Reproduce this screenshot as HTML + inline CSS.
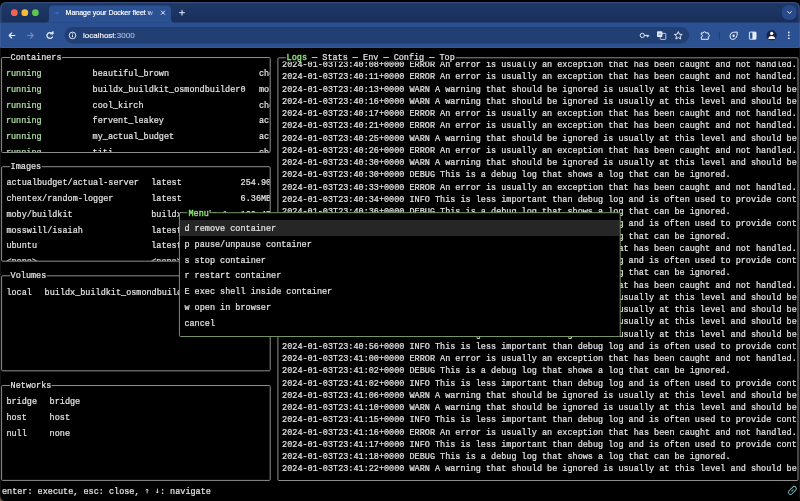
<!DOCTYPE html>
<html><head><meta charset="utf-8"><style>
html,body{margin:0;padding:0;background:#000;width:800px;height:501px;overflow:hidden;position:relative}
svg{will-change:transform}
svg text{white-space:pre}
</style></head><body>
<svg width="800" height="501" viewBox="0 0 800 501" style="position:absolute;left:0;top:0">
<rect x="0" y="0" width="800" height="501" fill="#000"/>
<rect x="1.6" y="57.5" width="268.59999999999997" height="95.0" fill="none" stroke="#8e8e8e" stroke-width="1" rx="1"/>
<rect x="1.6" y="166.7" width="268.59999999999997" height="94.5" fill="none" stroke="#8e8e8e" stroke-width="1" rx="1"/>
<rect x="1.6" y="275.8" width="268.59999999999997" height="95.0" fill="none" stroke="#8e8e8e" stroke-width="1" rx="1"/>
<rect x="1.6" y="385.5" width="268.59999999999997" height="94.89999999999998" fill="none" stroke="#8e8e8e" stroke-width="1" rx="1"/>
<clipPath id="c1"><rect x="2.1" y="58.0" width="267.59999999999997" height="94.0"/></clipPath><g clip-path="url(#c1)">
<text transform="translate(5.9,76.2) scale(1,1.12)" fill="#b0e0a5" stroke="#b0e0a5" stroke-width="0.2" font-size="8.5" font-family='"Liberation Mono", monospace' >running</text>
<text transform="translate(92.6,76.2) scale(1,1.12)" fill="#e4e4e4" stroke="#e4e4e4" stroke-width="0.2" font-size="8.5" font-family='"Liberation Mono", monospace' >beautiful_brown</text>
<text transform="translate(259.0,76.2) scale(1,1.12)" fill="#e4e4e4" stroke="#e4e4e4" stroke-width="0.2" font-size="8.5" font-family='"Liberation Mono", monospace' >che</text>
<text transform="translate(5.9,91.95) scale(1,1.12)" fill="#b0e0a5" stroke="#b0e0a5" stroke-width="0.2" font-size="8.5" font-family='"Liberation Mono", monospace' >running</text>
<text transform="translate(92.6,91.95) scale(1,1.12)" fill="#e4e4e4" stroke="#e4e4e4" stroke-width="0.2" font-size="8.5" font-family='"Liberation Mono", monospace' >buildx_buildkit_osmondbuilder0</text>
<text transform="translate(259.0,91.95) scale(1,1.12)" fill="#e4e4e4" stroke="#e4e4e4" stroke-width="0.2" font-size="8.5" font-family='"Liberation Mono", monospace' >moby/buildkit</text>
<text transform="translate(5.9,107.7) scale(1,1.12)" fill="#b0e0a5" stroke="#b0e0a5" stroke-width="0.2" font-size="8.5" font-family='"Liberation Mono", monospace' >running</text>
<text transform="translate(92.6,107.7) scale(1,1.12)" fill="#e4e4e4" stroke="#e4e4e4" stroke-width="0.2" font-size="8.5" font-family='"Liberation Mono", monospace' >cool_kirch</text>
<text transform="translate(259.0,107.7) scale(1,1.12)" fill="#e4e4e4" stroke="#e4e4e4" stroke-width="0.2" font-size="8.5" font-family='"Liberation Mono", monospace' >chentex/random-logger</text>
<text transform="translate(5.9,123.45) scale(1,1.12)" fill="#b0e0a5" stroke="#b0e0a5" stroke-width="0.2" font-size="8.5" font-family='"Liberation Mono", monospace' >running</text>
<text transform="translate(92.6,123.45) scale(1,1.12)" fill="#e4e4e4" stroke="#e4e4e4" stroke-width="0.2" font-size="8.5" font-family='"Liberation Mono", monospace' >fervent_leakey</text>
<text transform="translate(259.0,123.45) scale(1,1.12)" fill="#e4e4e4" stroke="#e4e4e4" stroke-width="0.2" font-size="8.5" font-family='"Liberation Mono", monospace' >actualbudget/actual-server</text>
<text transform="translate(5.9,139.2) scale(1,1.12)" fill="#b0e0a5" stroke="#b0e0a5" stroke-width="0.2" font-size="8.5" font-family='"Liberation Mono", monospace' >running</text>
<text transform="translate(92.6,139.2) scale(1,1.12)" fill="#e4e4e4" stroke="#e4e4e4" stroke-width="0.2" font-size="8.5" font-family='"Liberation Mono", monospace' >my_actual_budget</text>
<text transform="translate(259.0,139.2) scale(1,1.12)" fill="#e4e4e4" stroke="#e4e4e4" stroke-width="0.2" font-size="8.5" font-family='"Liberation Mono", monospace' >actualbudget/actual-server</text>
<text transform="translate(5.9,154.95) scale(1,1.12)" fill="#b0e0a5" stroke="#b0e0a5" stroke-width="0.2" font-size="8.5" font-family='"Liberation Mono", monospace' >running</text>
<text transform="translate(92.6,154.95) scale(1,1.12)" fill="#e4e4e4" stroke="#e4e4e4" stroke-width="0.2" font-size="8.5" font-family='"Liberation Mono", monospace' >titi</text>
<text transform="translate(259.0,154.95) scale(1,1.12)" fill="#e4e4e4" stroke="#e4e4e4" stroke-width="0.2" font-size="8.5" font-family='"Liberation Mono", monospace' >chentex/random-logger</text>
</g>
<clipPath id="c2"><rect x="2.1" y="167.2" width="267.59999999999997" height="93.5"/></clipPath><g clip-path="url(#c2)">
<text transform="translate(6.4,185.39999999999998) scale(1,1.12)" fill="#e4e4e4" stroke="#e4e4e4" stroke-width="0.2" font-size="8.5" font-family='"Liberation Mono", monospace' >actualbudget/actual-server</text>
<text transform="translate(151.2,185.39999999999998) scale(1,1.12)" fill="#e4e4e4" stroke="#e4e4e4" stroke-width="0.2" font-size="8.5" font-family='"Liberation Mono", monospace' >latest</text>
<text transform="translate(240.6,185.39999999999998) scale(1,1.12)" fill="#e4e4e4" stroke="#e4e4e4" stroke-width="0.2" font-size="8.5" font-family='"Liberation Mono", monospace' >254.90MB</text>
<text transform="translate(6.4,201.14999999999998) scale(1,1.12)" fill="#e4e4e4" stroke="#e4e4e4" stroke-width="0.2" font-size="8.5" font-family='"Liberation Mono", monospace' >chentex/random-logger</text>
<text transform="translate(151.2,201.14999999999998) scale(1,1.12)" fill="#e4e4e4" stroke="#e4e4e4" stroke-width="0.2" font-size="8.5" font-family='"Liberation Mono", monospace' >latest</text>
<text transform="translate(240.6,201.14999999999998) scale(1,1.12)" fill="#e4e4e4" stroke="#e4e4e4" stroke-width="0.2" font-size="8.5" font-family='"Liberation Mono", monospace' >6.36MB</text>
<text transform="translate(6.4,216.89999999999998) scale(1,1.12)" fill="#e4e4e4" stroke="#e4e4e4" stroke-width="0.2" font-size="8.5" font-family='"Liberation Mono", monospace' >moby/buildkit</text>
<text transform="translate(151.2,216.89999999999998) scale(1,1.12)" fill="#e4e4e4" stroke="#e4e4e4" stroke-width="0.2" font-size="8.5" font-family='"Liberation Mono", monospace' >buildx-stable-1</text>
<text transform="translate(240.6,216.89999999999998) scale(1,1.12)" fill="#e4e4e4" stroke="#e4e4e4" stroke-width="0.2" font-size="8.5" font-family='"Liberation Mono", monospace' >160.47MB</text>
<text transform="translate(6.4,232.64999999999998) scale(1,1.12)" fill="#e4e4e4" stroke="#e4e4e4" stroke-width="0.2" font-size="8.5" font-family='"Liberation Mono", monospace' >mosswill/isaiah</text>
<text transform="translate(151.2,232.64999999999998) scale(1,1.12)" fill="#e4e4e4" stroke="#e4e4e4" stroke-width="0.2" font-size="8.5" font-family='"Liberation Mono", monospace' >latest</text>
<text transform="translate(240.6,232.64999999999998) scale(1,1.12)" fill="#e4e4e4" stroke="#e4e4e4" stroke-width="0.2" font-size="8.5" font-family='"Liberation Mono", monospace' >36.3MB</text>
<text transform="translate(6.4,248.39999999999998) scale(1,1.12)" fill="#e4e4e4" stroke="#e4e4e4" stroke-width="0.2" font-size="8.5" font-family='"Liberation Mono", monospace' >ubuntu</text>
<text transform="translate(151.2,248.39999999999998) scale(1,1.12)" fill="#e4e4e4" stroke="#e4e4e4" stroke-width="0.2" font-size="8.5" font-family='"Liberation Mono", monospace' >latest</text>
<text transform="translate(240.6,248.39999999999998) scale(1,1.12)" fill="#e4e4e4" stroke="#e4e4e4" stroke-width="0.2" font-size="8.5" font-family='"Liberation Mono", monospace' >77.9MB</text>
<text transform="translate(6.4,264.15) scale(1,1.12)" fill="#e4e4e4" stroke="#e4e4e4" stroke-width="0.2" font-size="8.5" font-family='"Liberation Mono", monospace' >&lt;none&gt;</text>
<text transform="translate(151.2,264.15) scale(1,1.12)" fill="#e4e4e4" stroke="#e4e4e4" stroke-width="0.2" font-size="8.5" font-family='"Liberation Mono", monospace' >&lt;none&gt;</text>
<text transform="translate(240.6,264.15) scale(1,1.12)" fill="#e4e4e4" stroke="#e4e4e4" stroke-width="0.2" font-size="8.5" font-family='"Liberation Mono", monospace' >1.2MB</text>
</g>
<clipPath id="c3"><rect x="2.1" y="276.3" width="267.59999999999997" height="94.0"/></clipPath><g clip-path="url(#c3)">
<text transform="translate(6.4,294.5) scale(1,1.12)" fill="#e4e4e4" stroke="#e4e4e4" stroke-width="0.2" font-size="8.5" font-family='"Liberation Mono", monospace' >local</text>
<text transform="translate(44.6,294.5) scale(1,1.12)" fill="#e4e4e4" stroke="#e4e4e4" stroke-width="0.2" font-size="8.5" font-family='"Liberation Mono", monospace' >buildx_buildkit_osmondbuilder0_state</text>
</g>
<text transform="translate(6.4,404.2) scale(1,1.12)" fill="#e4e4e4" stroke="#e4e4e4" stroke-width="0.2" font-size="8.5" font-family='"Liberation Mono", monospace' >bridge</text>
<text transform="translate(49.6,404.2) scale(1,1.12)" fill="#e4e4e4" stroke="#e4e4e4" stroke-width="0.2" font-size="8.5" font-family='"Liberation Mono", monospace' >bridge</text>
<text transform="translate(6.4,419.95) scale(1,1.12)" fill="#e4e4e4" stroke="#e4e4e4" stroke-width="0.2" font-size="8.5" font-family='"Liberation Mono", monospace' >host</text>
<text transform="translate(49.6,419.95) scale(1,1.12)" fill="#e4e4e4" stroke="#e4e4e4" stroke-width="0.2" font-size="8.5" font-family='"Liberation Mono", monospace' >host</text>
<text transform="translate(6.4,435.7) scale(1,1.12)" fill="#e4e4e4" stroke="#e4e4e4" stroke-width="0.2" font-size="8.5" font-family='"Liberation Mono", monospace' >null</text>
<text transform="translate(49.6,435.7) scale(1,1.12)" fill="#e4e4e4" stroke="#e4e4e4" stroke-width="0.2" font-size="8.5" font-family='"Liberation Mono", monospace' >none</text>
<rect x="10.2" y="52.5" width="51.8" height="10" fill="#000" />
<text transform="translate(10.6,59.5) scale(1,1.12)" fill="#e4e4e4" stroke="#e4e4e4" stroke-width="0.2" font-size="8.5" font-family='"Liberation Mono", monospace' >Containers</text>
<rect x="10.2" y="161.7" width="31.4" height="10" fill="#000" />
<text transform="translate(10.6,168.7) scale(1,1.12)" fill="#e4e4e4" stroke="#e4e4e4" stroke-width="0.2" font-size="8.5" font-family='"Liberation Mono", monospace' >Images</text>
<rect x="10.2" y="270.8" width="36.49999999999999" height="10" fill="#000" />
<text transform="translate(10.6,277.8) scale(1,1.12)" fill="#e4e4e4" stroke="#e4e4e4" stroke-width="0.2" font-size="8.5" font-family='"Liberation Mono", monospace' >Volumes</text>
<rect x="10.2" y="380.5" width="41.599999999999994" height="10" fill="#000" />
<text transform="translate(10.6,387.5) scale(1,1.12)" fill="#e4e4e4" stroke="#e4e4e4" stroke-width="0.2" font-size="8.5" font-family='"Liberation Mono", monospace' >Networks</text>
<rect x="277.9" y="57.8" width="520.1" height="422.7" fill="none" stroke="#8e8e8e" stroke-width="1" rx="1"/>
<clipPath id="c4"><rect x="278.4" y="61.4" width="518.9" height="418.6"/></clipPath><g clip-path="url(#c4)">
<text transform="translate(282.1,67.1) scale(1,1.12)" fill="#e4e4e4" stroke="#e4e4e4" stroke-width="0.2" font-size="8.5" font-family='"Liberation Mono", monospace' >2024-01-03T23:40:08+0000 ERROR An error is usually an exception that has been caught and not handled.</text>
<text transform="translate(282.1,79.35) scale(1,1.12)" fill="#e4e4e4" stroke="#e4e4e4" stroke-width="0.2" font-size="8.5" font-family='"Liberation Mono", monospace' >2024-01-03T23:40:11+0000 ERROR An error is usually an exception that has been caught and not handled.</text>
<text transform="translate(282.1,91.6) scale(1,1.12)" fill="#e4e4e4" stroke="#e4e4e4" stroke-width="0.2" font-size="8.5" font-family='"Liberation Mono", monospace' >2024-01-03T23:40:13+0000 WARN A warning that should be ignored is usually at this level and should be</text>
<text transform="translate(282.1,103.85) scale(1,1.12)" fill="#e4e4e4" stroke="#e4e4e4" stroke-width="0.2" font-size="8.5" font-family='"Liberation Mono", monospace' >2024-01-03T23:40:16+0000 WARN A warning that should be ignored is usually at this level and should be</text>
<text transform="translate(282.1,116.1) scale(1,1.12)" fill="#e4e4e4" stroke="#e4e4e4" stroke-width="0.2" font-size="8.5" font-family='"Liberation Mono", monospace' >2024-01-03T23:40:17+0000 ERROR An error is usually an exception that has been caught and not handled.</text>
<text transform="translate(282.1,128.35) scale(1,1.12)" fill="#e4e4e4" stroke="#e4e4e4" stroke-width="0.2" font-size="8.5" font-family='"Liberation Mono", monospace' >2024-01-03T23:40:21+0000 ERROR An error is usually an exception that has been caught and not handled.</text>
<text transform="translate(282.1,140.6) scale(1,1.12)" fill="#e4e4e4" stroke="#e4e4e4" stroke-width="0.2" font-size="8.5" font-family='"Liberation Mono", monospace' >2024-01-03T23:40:25+0000 WARN A warning that should be ignored is usually at this level and should be</text>
<text transform="translate(282.1,152.85) scale(1,1.12)" fill="#e4e4e4" stroke="#e4e4e4" stroke-width="0.2" font-size="8.5" font-family='"Liberation Mono", monospace' >2024-01-03T23:40:26+0000 ERROR An error is usually an exception that has been caught and not handled.</text>
<text transform="translate(282.1,165.1) scale(1,1.12)" fill="#e4e4e4" stroke="#e4e4e4" stroke-width="0.2" font-size="8.5" font-family='"Liberation Mono", monospace' >2024-01-03T23:40:30+0000 WARN A warning that should be ignored is usually at this level and should be</text>
<text transform="translate(282.1,177.35) scale(1,1.12)" fill="#e4e4e4" stroke="#e4e4e4" stroke-width="0.2" font-size="8.5" font-family='"Liberation Mono", monospace' >2024-01-03T23:40:30+0000 DEBUG This is a debug log that shows a log that can be ignored.</text>
<text transform="translate(282.1,189.6) scale(1,1.12)" fill="#e4e4e4" stroke="#e4e4e4" stroke-width="0.2" font-size="8.5" font-family='"Liberation Mono", monospace' >2024-01-03T23:40:33+0000 ERROR An error is usually an exception that has been caught and not handled.</text>
<text transform="translate(282.1,201.85) scale(1,1.12)" fill="#e4e4e4" stroke="#e4e4e4" stroke-width="0.2" font-size="8.5" font-family='"Liberation Mono", monospace' >2024-01-03T23:40:34+0000 INFO This is less important than debug log and is often used to provide cont</text>
<text transform="translate(282.1,214.1) scale(1,1.12)" fill="#e4e4e4" stroke="#e4e4e4" stroke-width="0.2" font-size="8.5" font-family='"Liberation Mono", monospace' >2024-01-03T23:40:36+0000 DEBUG This is a debug log that shows a log that can be ignored.</text>
<text transform="translate(282.1,226.35) scale(1,1.12)" fill="#e4e4e4" stroke="#e4e4e4" stroke-width="0.2" font-size="8.5" font-family='"Liberation Mono", monospace' >2024-01-03T23:40:38+0000 INFO This is less important than debug log and is often used to provide cont</text>
<text transform="translate(282.1,238.6) scale(1,1.12)" fill="#e4e4e4" stroke="#e4e4e4" stroke-width="0.2" font-size="8.5" font-family='"Liberation Mono", monospace' >2024-01-03T23:40:40+0000 DEBUG This is a debug log that shows a log that can be ignored.</text>
<text transform="translate(282.1,250.85) scale(1,1.12)" fill="#e4e4e4" stroke="#e4e4e4" stroke-width="0.2" font-size="8.5" font-family='"Liberation Mono", monospace' >2024-01-03T23:40:43+0000 ERROR An error is usually an exception that has been caught and not handled.</text>
<text transform="translate(282.1,263.1) scale(1,1.12)" fill="#e4e4e4" stroke="#e4e4e4" stroke-width="0.2" font-size="8.5" font-family='"Liberation Mono", monospace' >2024-01-03T23:40:45+0000 INFO This is less important than debug log and is often used to provide cont</text>
<text transform="translate(282.1,275.35) scale(1,1.12)" fill="#e4e4e4" stroke="#e4e4e4" stroke-width="0.2" font-size="8.5" font-family='"Liberation Mono", monospace' >2024-01-03T23:40:47+0000 DEBUG This is a debug log that shows a log that can be ignored.</text>
<text transform="translate(282.1,287.6) scale(1,1.12)" fill="#e4e4e4" stroke="#e4e4e4" stroke-width="0.2" font-size="8.5" font-family='"Liberation Mono", monospace' >2024-01-03T23:40:49+0000 ERROR An error is usually an exception that has been caught and not handled.</text>
<text transform="translate(282.1,299.85) scale(1,1.12)" fill="#e4e4e4" stroke="#e4e4e4" stroke-width="0.2" font-size="8.5" font-family='"Liberation Mono", monospace' >2024-01-03T23:40:51+0000 WARN A warning that should be ignored is usually at this level and should be</text>
<text transform="translate(282.1,312.1) scale(1,1.12)" fill="#e4e4e4" stroke="#e4e4e4" stroke-width="0.2" font-size="8.5" font-family='"Liberation Mono", monospace' >2024-01-03T23:40:52+0000 WARN A warning that should be ignored is usually at this level and should be</text>
<text transform="translate(282.1,324.35) scale(1,1.12)" fill="#e4e4e4" stroke="#e4e4e4" stroke-width="0.2" font-size="8.5" font-family='"Liberation Mono", monospace' >2024-01-03T23:40:54+0000 WARN A warning that should be ignored is usually at this level and should be</text>
<text transform="translate(282.1,336.6) scale(1,1.12)" fill="#e4e4e4" stroke="#e4e4e4" stroke-width="0.2" font-size="8.5" font-family='"Liberation Mono", monospace' >2024-01-03T23:40:55+0000 WARN A warning that should be ignored is usually at this level and should be</text>
<text transform="translate(282.1,348.85) scale(1,1.12)" fill="#e4e4e4" stroke="#e4e4e4" stroke-width="0.2" font-size="8.5" font-family='"Liberation Mono", monospace' >2024-01-03T23:40:56+0000 INFO This is less important than debug log and is often used to provide cont</text>
<text transform="translate(282.1,361.1) scale(1,1.12)" fill="#e4e4e4" stroke="#e4e4e4" stroke-width="0.2" font-size="8.5" font-family='"Liberation Mono", monospace' >2024-01-03T23:41:00+0000 ERROR An error is usually an exception that has been caught and not handled.</text>
<text transform="translate(282.1,373.35) scale(1,1.12)" fill="#e4e4e4" stroke="#e4e4e4" stroke-width="0.2" font-size="8.5" font-family='"Liberation Mono", monospace' >2024-01-03T23:41:02+0000 DEBUG This is a debug log that shows a log that can be ignored.</text>
<text transform="translate(282.1,385.6) scale(1,1.12)" fill="#e4e4e4" stroke="#e4e4e4" stroke-width="0.2" font-size="8.5" font-family='"Liberation Mono", monospace' >2024-01-03T23:41:02+0000 INFO This is less important than debug log and is often used to provide cont</text>
<text transform="translate(282.1,397.85) scale(1,1.12)" fill="#e4e4e4" stroke="#e4e4e4" stroke-width="0.2" font-size="8.5" font-family='"Liberation Mono", monospace' >2024-01-03T23:41:06+0000 WARN A warning that should be ignored is usually at this level and should be</text>
<text transform="translate(282.1,410.1) scale(1,1.12)" fill="#e4e4e4" stroke="#e4e4e4" stroke-width="0.2" font-size="8.5" font-family='"Liberation Mono", monospace' >2024-01-03T23:41:10+0000 WARN A warning that should be ignored is usually at this level and should be</text>
<text transform="translate(282.1,422.35) scale(1,1.12)" fill="#e4e4e4" stroke="#e4e4e4" stroke-width="0.2" font-size="8.5" font-family='"Liberation Mono", monospace' >2024-01-03T23:41:15+0000 INFO This is less important than debug log and is often used to provide cont</text>
<text transform="translate(282.1,434.6) scale(1,1.12)" fill="#e4e4e4" stroke="#e4e4e4" stroke-width="0.2" font-size="8.5" font-family='"Liberation Mono", monospace' >2024-01-03T23:41:16+0000 ERROR An error is usually an exception that has been caught and not handled.</text>
<text transform="translate(282.1,446.85) scale(1,1.12)" fill="#e4e4e4" stroke="#e4e4e4" stroke-width="0.2" font-size="8.5" font-family='"Liberation Mono", monospace' >2024-01-03T23:41:17+0000 INFO This is less important than debug log and is often used to provide cont</text>
<text transform="translate(282.1,459.1) scale(1,1.12)" fill="#e4e4e4" stroke="#e4e4e4" stroke-width="0.2" font-size="8.5" font-family='"Liberation Mono", monospace' >2024-01-03T23:41:18+0000 DEBUG This is a debug log that shows a log that can be ignored.</text>
<text transform="translate(282.1,471.35) scale(1,1.12)" fill="#e4e4e4" stroke="#e4e4e4" stroke-width="0.2" font-size="8.5" font-family='"Liberation Mono", monospace' >2024-01-03T23:41:22+0000 WARN A warning that should be ignored is usually at this level and should be</text>
</g>
<rect x="285.8" y="54.0" width="170" height="7.4" fill="#000" />
<text transform="translate(286.6,60.0) scale(1,1.12)" font-size="8.5" font-family='"Liberation Mono", monospace' fill="#e4e4e4" stroke="#e4e4e4" stroke-width="0.2"><tspan fill="#8fe67b" stroke="#8fe67b" stroke-width="0.35">Logs</tspan> — Stats — Env — Config — Top</text>
<rect x="179.4" y="212.7" width="440.80000000000007" height="123.80000000000001" fill="#000" />
<rect x="180.0" y="220.0" width="439.6000000000001" height="16.0" fill="#262626" />
<rect x="179.4" y="212.7" width="440.80000000000007" height="123.80000000000001" fill="none" stroke="#7a9c66" stroke-width="0.95" rx="1"/>
<text transform="translate(184.4,231.0) scale(1,1.12)" fill="#e4e4e4" stroke="#e4e4e4" stroke-width="0.2" font-size="8.5" font-family='"Liberation Mono", monospace' >d remove container</text>
<text transform="translate(184.4,246.75) scale(1,1.12)" fill="#e4e4e4" stroke="#e4e4e4" stroke-width="0.2" font-size="8.5" font-family='"Liberation Mono", monospace' >p pause/unpause container</text>
<text transform="translate(184.4,262.5) scale(1,1.12)" fill="#e4e4e4" stroke="#e4e4e4" stroke-width="0.2" font-size="8.5" font-family='"Liberation Mono", monospace' >s stop container</text>
<text transform="translate(184.4,278.25) scale(1,1.12)" fill="#e4e4e4" stroke="#e4e4e4" stroke-width="0.2" font-size="8.5" font-family='"Liberation Mono", monospace' >r restart container</text>
<text transform="translate(184.4,294.0) scale(1,1.12)" fill="#e4e4e4" stroke="#e4e4e4" stroke-width="0.2" font-size="8.5" font-family='"Liberation Mono", monospace' >E exec shell inside container</text>
<text transform="translate(184.4,309.75) scale(1,1.12)" fill="#e4e4e4" stroke="#e4e4e4" stroke-width="0.2" font-size="8.5" font-family='"Liberation Mono", monospace' >w open in browser</text>
<text transform="translate(184.4,325.5) scale(1,1.12)" fill="#e4e4e4" stroke="#e4e4e4" stroke-width="0.2" font-size="8.5" font-family='"Liberation Mono", monospace' >cancel</text>
<rect x="187.5" y="207.7" width="22" height="9" fill="#000" />
<text transform="translate(188.5,215.89999999999998) scale(1,1.12)" fill="#8fe67b" stroke="#8fe67b" stroke-width="0.35" font-size="8.5" font-family='"Liberation Mono", monospace' >Menu</text>
<text transform="translate(1.95,493.5) scale(1,1.12)" fill="#e4e4e4" stroke="#e4e4e4" stroke-width="0.2" font-size="8.5" font-family='"Liberation Mono", monospace' >enter: execute, esc: close,    : navigate</text>
<path d="M147.2,493.4 L147.2,489 M145.9,490.4 L147.2,489 L148.5,490.4 M157.4,488.6 L157.4,493 M156.1,491.6 L157.4,493 L158.7,491.6" stroke="#e4e4e4" stroke-width="0.9" fill="none"/>
<defs><linearGradient id="stripg" gradientUnits="userSpaceOnUse" x1="0" x2="0" y1="2" y2="22.5"><stop offset="0" stop-color="#1e3866"/><stop offset="0.55" stop-color="#1c3461"/><stop offset="1" stop-color="#182e59"/></linearGradient><linearGradient id="fade" gradientUnits="userSpaceOnUse" x1="145" x2="157" y1="0" y2="0"><stop offset="0" stop-color="#ffffff"/><stop offset="1" stop-color="#ffffff" stop-opacity="0.05"/></linearGradient></defs>
<path d="M0,8.5 Q0,2.1 6.4,2.1 L793.6,2.1 Q800,2.1 800,8.5 L800,47.7 L0,47.7 Z" fill="url(#stripg)"/>
<path d="M0.9,22.5 L0.9,8.5 Q0.9,2.7 6.5,2.7 L793.5,2.7 Q799.1,2.7 799.1,8.5 L799.1,22.5" stroke="#43598a" stroke-width="0.8" fill="none"/>
<rect x="0" y="22.5" width="800" height="25.2" fill="#2b5192"/>
<path d="M0.5,22.5 L0.5,47.7 M799.5,22.5 L799.5,47.7" stroke="#3f5f9c" stroke-width="0.8"/>
<path d="M44.8,22.7 Q49,22.7 49,18.5 L49,9.6 Q49,5.5 53.1,5.5 L166.9,5.5 Q171,5.5 171,9.6 L171,18.5 Q171,22.7 175.2,22.7 Z" fill="#2b5192"/>
<circle cx="14.3" cy="12.7" r="3.4" fill="#ef6358"/>
<circle cx="24.8" cy="12.7" r="3.4" fill="#f4bb3c"/>
<circle cx="35.4" cy="12.7" r="3.4" fill="#5ec64f"/>
<ellipse cx="57.2" cy="13" rx="2.0" ry="1.3" fill="#3d63c4"/>
<text x="65.6" y="15.3" font-size="7" font-family='"Liberation Sans", sans-serif' fill="url(#fade)" stroke="url(#fade)" stroke-width="0.18">Manage your Docker fleet w</text>
<path d="M161.3,11 L164.7,14.4 M164.7,11 L161.3,14.4" stroke="#e8eefc" stroke-width="1.0" stroke-linecap="round"/>
<path d="M182,10.3 L182,15.1 M179.6,12.7 L184.4,12.7" stroke="#e8eefc" stroke-width="1.0" stroke-linecap="round"/>
<rect x="782" y="5.3" width="14.4" height="14.4" rx="5.5" fill="#284a8a"/>
<path d="M787.6,11.6 L789.5,13.5 L791.4,11.6" stroke="#e8eefc" stroke-width="1.0" fill="none" stroke-linecap="round" stroke-linejoin="round"/>
<path d="M14.8,35.5 L9.2,35.5 M11.7,33 L9.2,35.5 L11.7,38" stroke="#e8eefc" stroke-width="1.15" fill="none" stroke-linecap="round" stroke-linejoin="round"/>
<path d="M27.6,35.5 L33.2,35.5 M30.7,33 L33.2,35.5 L30.7,38" stroke="#6f8cc4" stroke-width="1.1" fill="none" stroke-linecap="round" stroke-linejoin="round"/>
<path d="M52.3,34.0 A2.9,2.9 0 1 0 52.4,37.0" stroke="#e8eefc" stroke-width="1.25" fill="none" stroke-linecap="round"/>
<path d="M50.4,33.9 L53.2,33.9 L53.2,31.4 Z" fill="#e8eefc" stroke="#e8eefc" stroke-width="0.7" stroke-linejoin="round"/>
<rect x="64.5" y="26.9" width="624.5" height="16.5" rx="8.25" fill="#223f73"/>
<rect x="0" y="46.9" width="800" height="0.8" fill="#4263a0"/>
<circle cx="72.5" cy="35.4" r="3.3" stroke="#e8eefc" stroke-width="0.95" fill="none"/>
<path d="M72.5,34.7 L72.5,37.1" stroke="#e8eefc" stroke-width="0.9"/><circle cx="72.5" cy="33.5" r="0.5" fill="#e8eefc"/>
<text x="83" y="38.1" font-size="8" font-family='"Liberation Sans", sans-serif' fill="#ffffff" stroke="#ffffff" stroke-width="0.12">localhost<tspan fill="#aebbd8" stroke="#aebbd8">:3000</tspan></text>
<circle cx="642.3" cy="35.4" r="2.1" stroke="#e8eefc" stroke-width="0.95" fill="none"/>
<path d="M644.4,35.4 L648.7,35.4 M647.3,35.4 L647.3,37.3 M648.7,35.4 L648.7,36.6" stroke="#e8eefc" stroke-width="1.0" fill="none"/>
<rect x="660.2" y="33.4" width="5.6" height="6.0" rx="0.7" fill="none" stroke="#dfe6f5" stroke-width="0.8"/>
<rect x="657.0" y="31.2" width="5.4" height="5.8" rx="0.7" fill="#dfe6f5"/>
<path d="M658.5,34.2 L660.9,34.2" stroke="#223f73" stroke-width="0.6"/>
<polygon points="678.30,31.60 679.42,34.16 682.20,34.43 680.11,36.29 680.71,39.02 678.30,37.60 675.89,39.02 676.49,36.29 674.40,34.43 677.18,34.16" stroke="#e8eefc" stroke-width="0.95" fill="none" stroke-linejoin="round"/>
<path d="M701.3,32.9 L703.4,32.9 A1.15,1.15 0 0 1 705.7,32.9 L708.3,32.9 L708.3,34.6 A1.15,1.15 0 0 1 708.3,36.9 L708.3,39.3 L701.3,39.3 L701.3,36.9 A1.15,1.15 0 0 0 701.3,34.6 Z" stroke="#e8eefc" stroke-width="1.0" fill="none" stroke-linejoin="round"/>
<path d="M719.4,32.0 L719.4,39.4" stroke="#1f3b70" stroke-width="0.9"/>
<path d="M730,35.8 Q730.2,32.6 733.5,32.3 L737.3,32.0 Q737.3,36.2 736,37.8 Q734.6,39.4 732.2,39.4 Q729.9,39.2 730,35.8 Z" stroke="#e8eefc" stroke-width="1.0" fill="none" stroke-linejoin="round"/>
<circle cx="733.6" cy="35.8" r="1.2" fill="#e8eefc"/>
<rect x="749.4" y="32.1" width="6.6" height="7.1" rx="0.5" stroke="#e8eefc" stroke-width="0.95" fill="none"/>
<rect x="752.4" y="32.1" width="3.6" height="7.1" fill="#e8eefc"/>
<circle cx="771.6" cy="35.4" r="5.1" fill="#14244a"/>
<circle cx="771.7" cy="33.4" r="1.65" fill="#ffffff"/>
<path d="M768.3,38.9 Q768.4,36.0 771.7,36.0 Q775.0,36.0 775.1,38.9 Z" fill="#ffffff"/>
<rect x="788.0" y="31.60" width="1.6" height="1.6" rx="0.5" fill="#e8eefc"/>
<rect x="788.0" y="34.50" width="1.6" height="1.6" rx="0.5" fill="#e8eefc"/>
<rect x="788.0" y="37.40" width="1.6" height="1.6" rx="0.5" fill="#e8eefc"/>
<g transform="translate(792.4,490.4) rotate(-45)"><rect x="-4.7" y="-2.1" width="9.4" height="4.2" rx="2.1" stroke="#79c4c2" stroke-width="0.95" fill="none"/><path d="M-1.3,0 L1.3,0" stroke="#79c4c2" stroke-width="0.95"/></g>
<path d="M0.4,47.7 L0.4,498 M799.6,47.7 L799.6,498" stroke="#1a1a1a" stroke-width="0.8"/>
<path d="M0,496 Q0.5,500.5 4.5,501 L0,501 Z" fill="#6b5a40"/>
</svg>
</body></html>
